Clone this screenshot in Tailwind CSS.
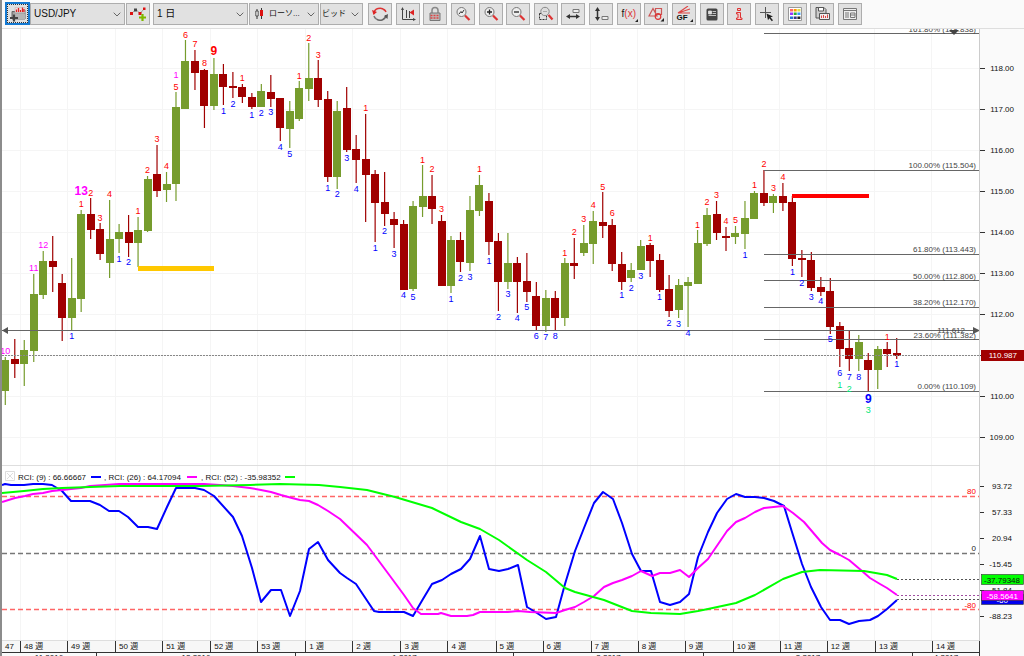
<!DOCTYPE html>
<html lang="ja">
<head>
<meta charset="utf-8">
<title>USD/JPY</title>
<script src="https://cdn.jsdelivr.net/npm/@tailwindcss/browser@4"></script>
</head>
<body class="h-screen overflow-hidden bg-[#fafafa] font-['Liberation_Sans','Noto_Sans_CJK_JP',sans-serif] text-[8px] text-[#111]">
<div class="flex min-h-full flex-col border-l-2 border-[#8c8c8c]">

<header class="flex h-[29px] items-center border-b border-[#dedede] pb-px pl-[3px]">
  <button type="button" aria-label="銘柄" class="flex h-[23px] w-[25px] shrink-0 items-center justify-center border-2 border-[#1379d2] bg-[#e1e1e1] outline-1 -outline-offset-3 outline-dotted outline-[#333]">
    <svg class="h-4 w-[18px]" viewBox="0 0 18 16"><path d="M3 5.500h3l1-1.500h9v9H3z" fill="#9a9a9a" stroke="#666"/><path d="M6 1.500h10v5H6z" fill="#f4dcdc" stroke="#bbb" stroke-width=".6"/><path d="M7.500 6V3.500M9.500 6V2M11.500 6V4M13.500 6V1.500M15 6V3" stroke="#d22" stroke-width="1.300"/><path d="M4 7.500h12v6H4z" fill="#b5b5b5"/><path d="M1 12h8M5 8.500v7" stroke="#444" stroke-width="2.200"/></svg>
  </button>
  <label class="relative block h-[22px] w-[95px] shrink-0">
    <select aria-label="通貨ペア" class="h-full w-full appearance-none border border-[#adadad] bg-[#e1e1e1] pl-[3px] text-[10px]"><option>USD/JPY</option></select>
    <svg class="pointer-events-none absolute top-[9px] right-1 h-[5px] w-2" viewBox="0 0 8 5"><path d="M.7.7 4 4 7.300.7" fill="none" stroke="#666"/></svg>
  </label>
  <button type="button" aria-label="比較を追加" class="ml-px flex h-[22px] w-6 shrink-0 items-center justify-center border border-[#adadad] bg-[#e1e1e1]">
    <svg class="h-4 w-4" viewBox="0 0 16 16"><path d="M1.500 7.500 6 3.500l4 4 4.500-5" fill="none" stroke="#999"/><path d="M0 6h3v3H0z" fill="#d11"/><path d="M4 2.500h3v3H4z" fill="#444"/><path d="M8.500 6h3v3h-3z" fill="#d11"/><path d="M13 1.500h2.500V4H13z" fill="#d11"/><path d="M9 11.500h7M12.500 8v7" stroke="#7fb800" stroke-width="2.200"/></svg>
  </button>
  <label class="relative ml-[3px] block h-[22px] w-[95px] shrink-0">
    <select aria-label="期間" class="h-full w-full appearance-none border border-[#adadad] bg-[#e1e1e1] pl-[3px] text-[10px]"><option>1 日</option></select>
    <svg class="pointer-events-none absolute top-[9px] right-1 h-[5px] w-2" viewBox="0 0 8 5"><path d="M.7.7 4 4 7.300.7" fill="none" stroke="#666"/></svg>
  </label>
  <label class="relative ml-px block h-[22px] w-[70px] shrink-0">
    <select aria-label="チャート種類" class="h-full w-full appearance-none border border-[#adadad] bg-[#e1e1e1] pl-[19px] text-[8px]"><option>ローソ...</option></select>
    <svg class="pointer-events-none absolute top-[5px] left-1.5 h-3 w-2.5" viewBox="0 0 10 12"><path d="M2 1v10M6.500 0v11" stroke="#333"/><path d="M.8 3h2.400v5H.8z" fill="#eee" stroke="#333" stroke-width=".8"/><path d="M5 2h3v6H5z" fill="#d11"/></svg>
    <svg class="pointer-events-none absolute top-[9px] right-1 h-[5px] w-2" viewBox="0 0 8 5"><path d="M.7.7 4 4 7.300.7" fill="none" stroke="#666"/></svg>
  </label>
  <label class="relative ml-px block h-[22px] w-[43px] shrink-0">
    <select aria-label="価格" class="h-full w-full appearance-none border border-[#adadad] bg-[#e1e1e1] pl-px text-[8px]"><option>ビッド</option></select>
    <svg class="pointer-events-none absolute top-[9px] right-1 h-[5px] w-2" viewBox="0 0 8 5"><path d="M.7.7 4 4 7.300.7" fill="none" stroke="#666"/></svg>
  </label>
  <div role="toolbar" aria-label="チャート操作" class="ml-[5px] flex w-[494px] shrink-0 justify-between *:flex *:h-[22px] *:w-6 *:items-center *:justify-center *:border *:border-[#adadad] *:bg-[#e1e1e1]">
    <button type="button" aria-label="更新"><svg class="h-4 w-4" viewBox="0 0 16 16" fill="none" stroke-width="1.500"><path d="M2 7a6 5 0 0 1 10.500-3" stroke="#d33"/><path d="M4.500 13.200A6 5.500 0 0 0 14 9" stroke="#666"/><path d="m0 4 1.500 5L5 6z" fill="#d22"/><path d="m12 10 4-2-.5 5z" fill="#555"/><path d="M12 3.500a5 5 0 0 1 2 2.500" stroke="#d33"/><path d="M2 10a6 5 0 0 0 2.500 3" stroke="#777"/></svg></button>
    <button type="button" aria-label="軸"><svg class="h-4 w-4" viewBox="0 0 16 16"><path d="M2.500 2v11.500H15M6.500 4v8M9.500 5v7" fill="none" stroke="#444"/><path d="m1 4 1.500-3L4 4zM13 12l3 1.500-3 1.500z" fill="#444"/><path d="M14 3.500v6L9.500 6.500z" fill="#d22"/></svg></button>
    <button type="button" aria-label="ロック"><svg class="h-4 w-4" viewBox="0 0 16 16"><path d="M5 7V4.500a3 3 0 0 1 6 0V7" fill="none" stroke="#888" stroke-width="1.500"/><path d="M3 7h10v7.500H3z" fill="#bbb" stroke="#777"/><path d="M3.500 9.500h9M3.500 12h9" stroke="#d44" stroke-width="1.300" stroke-dasharray="2 1"/></svg></button>
    <button type="button" aria-label="自動ズーム"><svg class="h-4 w-4" viewBox="0 0 16 16"><circle cx="6.500" cy="6" r="4.500" fill="#eee" stroke="#777"/><path d="m4 8 2-2.500 1 1.500 2-3" fill="none" stroke="#333"/><path d="m10 9.500 4.500 4.500" stroke="#d33" stroke-width="2.200"/></svg></button>
    <button type="button" aria-label="拡大"><svg class="h-4 w-4" viewBox="0 0 16 16"><circle cx="6.500" cy="6" r="4.500" fill="#eee" stroke="#777"/><path d="M4 6h5M6.500 3.500v5" stroke="#222" stroke-width="1.300"/><path d="m10 9.500 4.500 4.500" stroke="#d33" stroke-width="2.200"/></svg></button>
    <button type="button" aria-label="縮小"><svg class="h-4 w-4" viewBox="0 0 16 16"><circle cx="6.500" cy="6" r="4.500" fill="#eee" stroke="#777"/><path d="M4 6h5" stroke="#222" stroke-width="1.300"/><path d="m10 9.500 4.500 4.500" stroke="#d33" stroke-width="2.200"/></svg></button>
    <button type="button" aria-label="範囲ズーム"><svg class="h-4 w-4" viewBox="0 0 16 16"><path d="M1.500 7.500h7v6h-7z" fill="none" stroke="#333" stroke-dasharray="2 1"/><circle cx="7" cy="5.500" r="4.200" fill="#ddd" stroke="#888"/><path d="M5 5.500h4" stroke="#aaa"/><path d="m10.500 9 4 4.500" stroke="#d33" stroke-width="2.200"/></svg></button>
    <button type="button" aria-label="横方向"><svg class="h-4 w-4" viewBox="0 0 16 16"><path d="M8 3.500h6v3H8z" fill="#eee" stroke="#777"/><path d="M3 10.500h10" stroke="#333" stroke-width="1.500"/><path d="M5 8v5l-4-2.500zM11 8v5l4-2.500z" fill="#333"/></svg></button>
    <button type="button" aria-label="縦方向"><svg class="h-4 w-4" viewBox="0 0 16 16"><path d="M9 10.500h6v3H9z" fill="#eee" stroke="#777"/><path d="M4.500 3v10" stroke="#333" stroke-width="1.500"/><path d="M2 5h5l-2.500-4zM2 11h5l-2.500 4z" fill="#333"/></svg></button>
    <button type="button" aria-label="関数" class="relative text-[10px]"><span>f</span><span class="text-[#d33]">(x)</span><svg class="absolute right-0.5 bottom-0.5 h-[3px] w-[3px]" viewBox="0 0 3 3"><path d="M3 0v3H0z" fill="#222"/></svg></button>
    <button type="button" aria-label="図形"><svg class="h-4 w-4" viewBox="0 0 16 16"><path d="m5 2.500 4 7.500H1z M7.500 2.500h6v6h-6z" fill="none" stroke="#c55" stroke-width="1.200"/><circle cx="10" cy="10.500" r="2.800" fill="none" stroke="#d33" stroke-width="1.200"/><path d="M16 12v3.500h-3.500z" fill="#222"/></svg></button>
    <button type="button" aria-label="ギャン・フィボナッチ" class="relative"><svg class="absolute top-0.5 left-1 h-2 w-3.5" viewBox="0 0 14 8"><path d="M1 7 11 0M1 7l12-4M1 7h12" stroke="#d44" stroke-width="1.100"/></svg><span class="mt-2 mr-1 text-[8px] leading-none font-bold">GF</span><svg class="absolute right-0.5 bottom-0.5 h-[3px] w-[3px]" viewBox="0 0 3 3"><path d="M3 0v3H0z" fill="#222"/></svg></button>
    <button type="button" aria-label="ニュース"><svg class="h-4 w-4" viewBox="0 0 16 16"><rect x="2.500" y="2.500" width="11" height="12" rx="1.500" fill="#444"/><path d="M4.500 5h3v3h-3zM8.500 5.500H12M8.500 7.500H12M4.500 9.500H12" fill="#ddd" stroke="#ddd" stroke-width=".8"/></svg></button>
    <button type="button" aria-label="情報"><svg class="h-4 w-4" viewBox="0 0 16 16"><path d="M6.500 2.500h3v2h-3zM5.500 6.500h4v5.500H11v1.500H5.500V12H7V8H5.500z" fill="#f3cccc" stroke="#d33"/></svg></button>
    <button type="button" aria-label="十字カーソル"><svg class="h-4 w-4" viewBox="0 0 16 16"><path d="M6.500 1v11M1 6.500h11" stroke="#555"/><path d="m7.500 7.500 6.500 3-2.500.8 2.500 3-1.200 1-2.400-3-1.400 2z" fill="#222"/></svg></button>
    <button type="button" aria-label="配色"><svg class="h-4 w-4" viewBox="0 0 16 16"><path d="M1.500 1.500h13v13h-13z" fill="#fff" stroke="#999"/><path d="M3 3h3v2.500H3z" fill="#f66"/><path d="M6.700 3h3v2.500h-3z" fill="#f90"/><path d="M10.400 3h3v2.500h-3z" fill="#dd4"/><path d="M3 6.500h3V9H3z" fill="#93f"/><path d="M6.700 6.500h3V9h-3z" fill="#2a3"/><path d="M10.400 6.500h3V9h-3z" fill="#39f"/><path d="M3 10.500h3V13H3z" fill="#27c"/><path d="M6.700 10.500h3V13h-3z" fill="#338"/><path d="M10.400 10.500h3V13h-3z" fill="#222"/></svg></button>
    <button type="button" aria-label="保存"><svg class="h-4 w-4" viewBox="0 0 16 16"><path d="M2 1.500h8l2 2V12H2z" fill="#ccc" stroke="#555"/><path d="M4.500 1.500h5V5h-5z" fill="#fff" stroke="#555"/><path d="M5.500 7.500h10v6h-10z" fill="#eee" stroke="#555"/><path d="M7.500 12V9.500M9.500 12v-3M11.500 12v-2M13.500 12V8.500" stroke="#d44"/></svg></button>
    <button type="button" aria-label="レイアウト"><svg class="h-4 w-4" viewBox="0 0 16 16"><path d="M1.500 2.500h13v11h-13z" fill="#eee" stroke="#777"/><path d="M1.500 4.500h13M3 7h4M3 9h4M3 11h4" fill="none" stroke="#777"/><path d="M8.500 7h4.500v4.500H8.500zM8.500 9H13" fill="none" stroke="#777"/></svg></button>
  </div>
</header>

<main class="bg-white">
  <svg id="price" class="block h-auto w-full" viewBox="2 29 1022 437" role="img" aria-label="USD/JPY 日足">
    <rect x="980" y="29" width="44" height="437" fill="#fafafa"/>
  </svg>
  <svg id="rci" class="block h-auto w-full" viewBox="2 466 1022 175" role="img" aria-label="RCI">
    <rect x="980" y="466" width="44" height="175" fill="#fafafa"/>
  </svg>
</main>

<footer class="bg-[#fafafa]">
  <div class="grid grid-cols-[978fr_44fr]">
    <div>
      <ol id="weeks" class="grid h-3 grid-cols-[18fr_47fr_48fr_47fr_48fr_47fr_48fr_47fr_48fr_47fr_48fr_47fr_48fr_47fr_47fr_48fr_47fr_47fr_48fr_57fr_47fr] border-r border-b border-[#333] bg-[#f7f7f7] leading-[12px]"></ol>
      <ol id="months" class="grid h-3 grid-cols-[94fr_199fr_218fr_190fr_209fr_67fr] border-r border-[#333] text-center leading-[9px]"></ol>
    </div>
  </div>
</footer>
</div>

<script>
const NS = 'http://www.w3.org/2000/svg';
const price = document.getElementById('price'), rci = document.getElementById('rci');
function add(svg, name, attrs, text) {
  const e = document.createElementNS(NS, name);
  for (const k in attrs) e.setAttribute(k, attrs[k]);
  if (text !== undefined) e.textContent = text;
  svg.appendChild(e);
  return e;
}
const line = (s, x1, y1, x2, y2, stroke, extra = {}) => add(s, 'line', {x1, y1, x2, y2, stroke, ...extra});
const label = (s, x, y, t, fill, extra = {}) => add(s, 'text', {x, y, fill, 'font-size': 8, ...extra}, t);
const END = {'text-anchor': 'end'}, MID = {'text-anchor': 'middle'};
const px = i => 5.3 + i * 9.483;

// grid
const weekX = [20, 67, 115, 162, 210, 257, 305, 352, 400, 447, 495, 542, 590, 637, 684, 732, 779, 826, 874, 931];
for (const x of weekX) {
  line(price, x + .5, 29, x + .5, 466, '#f5f5f5');
  line(rci, x + .5, 466, x + .5, 641, '#f5f5f5');
}
for (let n = 0; n < 10; n++) {
  const y = Math.round(68 + n * 41.05);
  line(price, 2, y + .5, 979, y + .5, '#f5f5f5');
  line(price, 980, y + .5, 985, y + .5, '#333');
  if (n !== 7) label(price, 1014, y + 3, (118 - n) + '.00', '#111', END);
}

// [direction, high, body top, body bottom, low]
const candles = [
['u',357,360,391,405],['d',339,359,364,378],['u',340,350,364,386],['u',274,294,351,362],['u',251,261,295,299],['d',236,261,267,292],['d',274,283,318,341],['u',258,298,318,331],['u',210,214,299,312],['d',198,214,230,239],
['d',223,229,254,260],['u',200,239,263,278],['u',224,232,239,253],['d',215,232,243,257],['u',217,230,243,267],['u',176,179,231,232],['d',145,174,191,197],['u',172,184,190,202],['u',92,107,184,201],['u',40,61,109,109],
['d',50,61,73,90],['d',69,70,106,128],['u',58,74,106,110],['d',64,74,87,105],['d',72,86,88,98],['d',84,87,97,103],['d',93,97,107,109],['u',84,91,107,107],['d',75,92,99,107],['d',98,98,128,141],
['u',101,111,129,148],['u',81,88,119,121],['u',43,78,89,101],['d',60,78,100,107],['d',91,99,177,182],['u',101,111,177,189],['d',87,108,150,152],['d',135,149,160,183],['d',114,159,175,222],['d',170,174,203,242],
['d',172,202,214,226],['d',212,219,225,248],['d',220,224,290,290],['u',201,206,289,291],['u',165,196,207,217],['d',175,196,209,224],['d',215,221,286,286],['u',236,240,286,293],['d',232,240,262,272],['u',196,210,263,271],
['u',175,185,211,216],['d',193,201,242,255],['d',233,241,282,311],['u',233,263,282,289],['d',257,263,282,313],['d',253,281,292,302],['d',282,296,326,330],['u',290,298,326,332],['d',291,298,318,330],['u',258,263,318,326],
['d',238,263,266,279],['u',225,243,253,256],['u',211,221,244,264],['d',192,222,226,238],['d',219,225,264,271],['d',252,264,282,290],['u',263,270,278,282],['u',240,246,270,270],['d',243,245,261,277],['d',254,260,290,292],
['d',275,289,311,317],['u',279,285,310,318],['u',277,282,286,327],['u',230,243,284,284],['u',208,215,244,246],['d',201,214,233,240],['d',227,236,238,251],['u',226,233,237,244],['u',201,218,234,249],['u',191,193,219,219],
['d',170,193,203,206],['u',194,196,203,213],['d',183,196,203,211],['d',196,202,259,266],['d',250,258,260,277],['d',252,260,288,291],['d',277,287,292,296],['d',278,291,327,334],['d',322,326,349,367],['d',331,348,359,371],
['u',335,342,359,371],['d',353,360,370,391],['u',346,349,370,389],['d',342,349,354,367],['d',338,353,356,359]];
candles.forEach(([dir, hi, top, bot, lo], i) => {
  const c = dir === 'u' ? '#769c2d' : '#a00000', x = px(i);
  line(price, x, hi, x, lo, c, {'stroke-width': 1.2});
  add(price, 'rect', {x: Math.round(x - 4), y: top, width: 8, height: bot - top, fill: c});
});

// support and resistance
add(price, 'rect', {x: 138, y: 266, width: 76, height: 5, fill: '#ffc800'});
add(price, 'rect', {x: 792, y: 194, width: 77, height: 4, fill: '#ff0000'});
line(price, 2, 330.5, 979, 330.5, '#666');
add(price, 'path', {d: 'M2 330.5l6-3.500v7zM980 330.500l-7-3.500v7z', fill: '#555'});
line(price, 2, 355.5, 979, 355.5, '#888', {'stroke-dasharray': '2 1'});
label(price, 965, 333, '111.612', '#444', END);
[[33,'161.80% (118.838)',32],[170,'100.00% (115.504)',168],[254,'61.80% (113.443)',252],[280,'50.00% (112.806)',279],[307,'38.20% (112.170)',305],[339,'23.60% (111.382)',338],[391,'0.00% (110.109)',389]].forEach(([y, t, ty]) => {
  line(price, 764, y + .5, 979, y + .5, '#666');
  label(price, 976, ty, t, '#444', END);
});
add(price, 'path', {d: 'M949 30h10l-5 5z', fill: '#444'});

// bar counts: [candle, text, middle y]
function counts(fill, list) {
  for (const [i, t, y, bold] of list)
    label(price, px(i), y + (bold ? 4 : 3), t, fill, {...MID, 'font-size': bold ? 12 : 9, 'font-weight': bold ? 700 : 400});
}
counts('#ff00ff', [[0,'10',351],[3,'11',268],[4,'12',245],[8,'13',191,1],[18,'1',75]]);
counts('#ff0000', [[8,'1',204],[9,'2',193],[10,'3',218],[11,'4',194],[14,'1',211],[15,'2',170],[16,'3',139],[17,'4',166],[18,'5',87],[19,'6',35],[20,'7',44],[21,'8',63],[22,'9',51,1],[25,'1',78],[31,'1',76],[32,'2',38],[33,'3',55],[38,'1',108],[44,'1',160],[45,'2',169],[46,'3',209],[50,'1',169],[59,'1',253],[60,'2',232],[61,'3',219],[62,'4',205],[63,'5',187],[64,'6',213],[68,'1',238],[73,'1',225],[74,'2',202],[75,'3',195],[76,'4',221],[77,'5',220],[79,'1',185],[80,'2',164],[81,'3',188],[82,'4',177],[93,'1',337]]);
counts('#0000ff', [[7,'1',336],[12,'1',259],[13,'2',262],[23,'1',111],[24,'2',104],[26,'1',115],[27,'2',113],[28,'3',112],[29,'4',147],[30,'5',154],[34,'1',188],[35,'2',194],[36,'3',158],[37,'4',189],[39,'1',248],[40,'2',231],[41,'3',254],[42,'4',295],[43,'5',297],[47,'1',299],[48,'2',278],[49,'3',277],[51,'1',261],[52,'2',317],[53,'3',294],[54,'4',318],[55,'5',307],[56,'6',336],[57,'7',337],[58,'8',336],[65,'1',295],[66,'2',288],[67,'3',276],[69,'1',297],[70,'2',323],[71,'3',324],[72,'4',333],[78,'1',255],[83,'1',272],[84,'2',283],[85,'3',297],[86,'4',301],[87,'5',339],[88,'6',373],[89,'7',377],[90,'8',377],[91,'9',399,1],[94,'1',364]]);
counts('#00e676', [[88,'1',385],[89,'2',389],[91,'3',410]]);

line(price, 979.5, 29, 979.5, 466, '#ccc');
line(price, 2, 465.5, 979, 465.5, '#dedede');
add(price, 'rect', {x: 981, y: 350, width: 43, height: 11, fill: '#a00000'});
label(price, 1017, 358, '110.987', '#fff', END);

// RCI panel
for (const [y, t, color, dash, ty] of [[496,'80','#ff0000','#ff6666',494],[553,'0','#222222','#777777',551],[609,'-80','#ff0000','#ff6666',608]]) {
  line(rci, 2, y + .5, 979, y + .5, dash, {'stroke-dasharray': '5 3', 'stroke-width': 1.3});
  label(rci, 976, ty, t, color, END);
}
[[579,'#555'],[595,'#a050a0'],[599,'#555']].forEach(([y, c]) => line(rci, 897, y + .5, 979, y + .5, c, {'stroke-dasharray': '2 2'}));
const curve = (points, stroke) => add(rci, 'polyline', {points, stroke, fill: 'none', 'stroke-width': 2, 'stroke-linejoin': 'round'});
curve('2,485 5,484 11,485 24,485 33,484 43,484 52,485 62,491 71,501 90,501 100,505 109,511 119,511 128,517 138,527 148,527 157,529 167,507 176,488 195,488 204,490 214,496 233,517 242,536 252,568 261,602 271,590 281,590 290,616 300,591 309,549 318,542 328,560 340,573 347,578 356,584 374,611 379,612 404,612 413,616 423,599 432,584 442,580 451,574 461,569 470,559 480,536 489,569 499,571 508,569 518,565 527,607 537,613 546,619 556,617 565,584 575,551 584,528 594,503 603,492 613,499 622,523 632,554 641,571 651,571 660,602 670,605 680,602 689,594 698,557 708,532 717,513 727,499 736,494 745,497 755,497 764,498 774,501 784,506 792,532 802,564 811,587 821,607 830,620 840,620 849,624 859,621 870,620 878,616 887,609 897,600', '#0000ff');
curve('2,502 15,498 25,496 33,494 43,493 52,491 62,490 71,489 81,488 90,486 105,485 119,484 204,484 220,485 233,486 250,488 261,490 271,492 281,495 292,498 300,500 309,501 318,505 328,511 340,519 367,545 390,576 404,595 413,608 421,614 438,614 441,613 451,616 467,616 473,615 480,612 508,612 518,611 530,612 556,613 565,610 575,607 584,602 594,596 604,587 613,583 622,580 632,576 641,571 652,576 660,573 670,573 680,570 689,577 698,568 708,559 727,531 736,522 745,518 755,512 764,508 783,506 793,513 804,522 822,543 830,550 840,555 849,560 862,571 870,578 880,584 887,588 897,595', '#ff00ff');
curve('2,493 24,491 43,489 62,488 90,487 120,486 200,486 250,485 280,484 319,485 340,487 367,490 395,497 432,508 461,522 480,529 499,540 527,560 546,572 565,588 575,592 604,600 632,611 651,613 680,614 698,611 708,609 736,603 755,595 783,579 802,572 820,570 864,571 887,575 897,579', '#00ff00');

add(rci, 'path', {d: 'M5.500 471.500h9v9h-9zM7 473l6 6M13 473l-6 6', stroke: '#ddd', fill: 'none'});
[[18,'RCI: (9) : 66.66667','#0000ff',91,101],[104,', RCI: (26) : 64.17094','#ff00ff',187,197],[201,', RCI: (52) : -35.98352','#00ff00',285,295]].forEach(([x, t, c, a, b]) => {
  label(rci, x, 480, t, '#111');
  line(rci, a, 477, b, 477, c, {'stroke-width': 2});
});
line(rci, 979.5, 466, 979.5, 641, '#ccc');
line(rci, 2, 640.5, 979, 640.5, '#dedede');
[[486,'93.72'],[512,'57.33'],[538,'20.94'],[564,'-15.45'],[590,'-51.84'],[616,'-88.23']].forEach(([y, t]) => {
  line(rci, 980, y + .5, 984, y + .5, '#333');
  label(rci, 1012, y + 3, t, '#111', END);
});
[[594,'#0000ee','-60','#fff',1008],[590,'#ff00ff','-58.5641','#fff',1018],[574,'#00ff00','-37.79348','#111',1020]].forEach(([y, f, t, c, x]) => {
  add(rci, 'rect', {x: 981.5, y: y + .5, width: 42, height: 10, fill: f, stroke: '#333', 'stroke-width': .6});
  label(rci, x, y + 9, t, c, END);
});

// time axis
const fill = (id, items, cls) => items.forEach((t, i) => {
  const li = document.createElement('li');
  li.className = cls + (i ? ' border-l border-[#333]' : '');
  li.textContent = t;
  document.getElementById(id).appendChild(li);
});
fill('weeks', ['47','48 週','49 週','50 週','51 週','52 週','53 週','1 週','2 週','3 週','4 週','5 週','6 週','7 週','8 週','9 週','10 週','11 週','12 週','13 週','14 週'], 'pl-[3px] whitespace-nowrap overflow-hidden');
fill('months', ['11.2016','12.2016','1.2017','2.2017','3.2017','4.2017'], 'overflow-hidden');
</script>
</body>
</html>
